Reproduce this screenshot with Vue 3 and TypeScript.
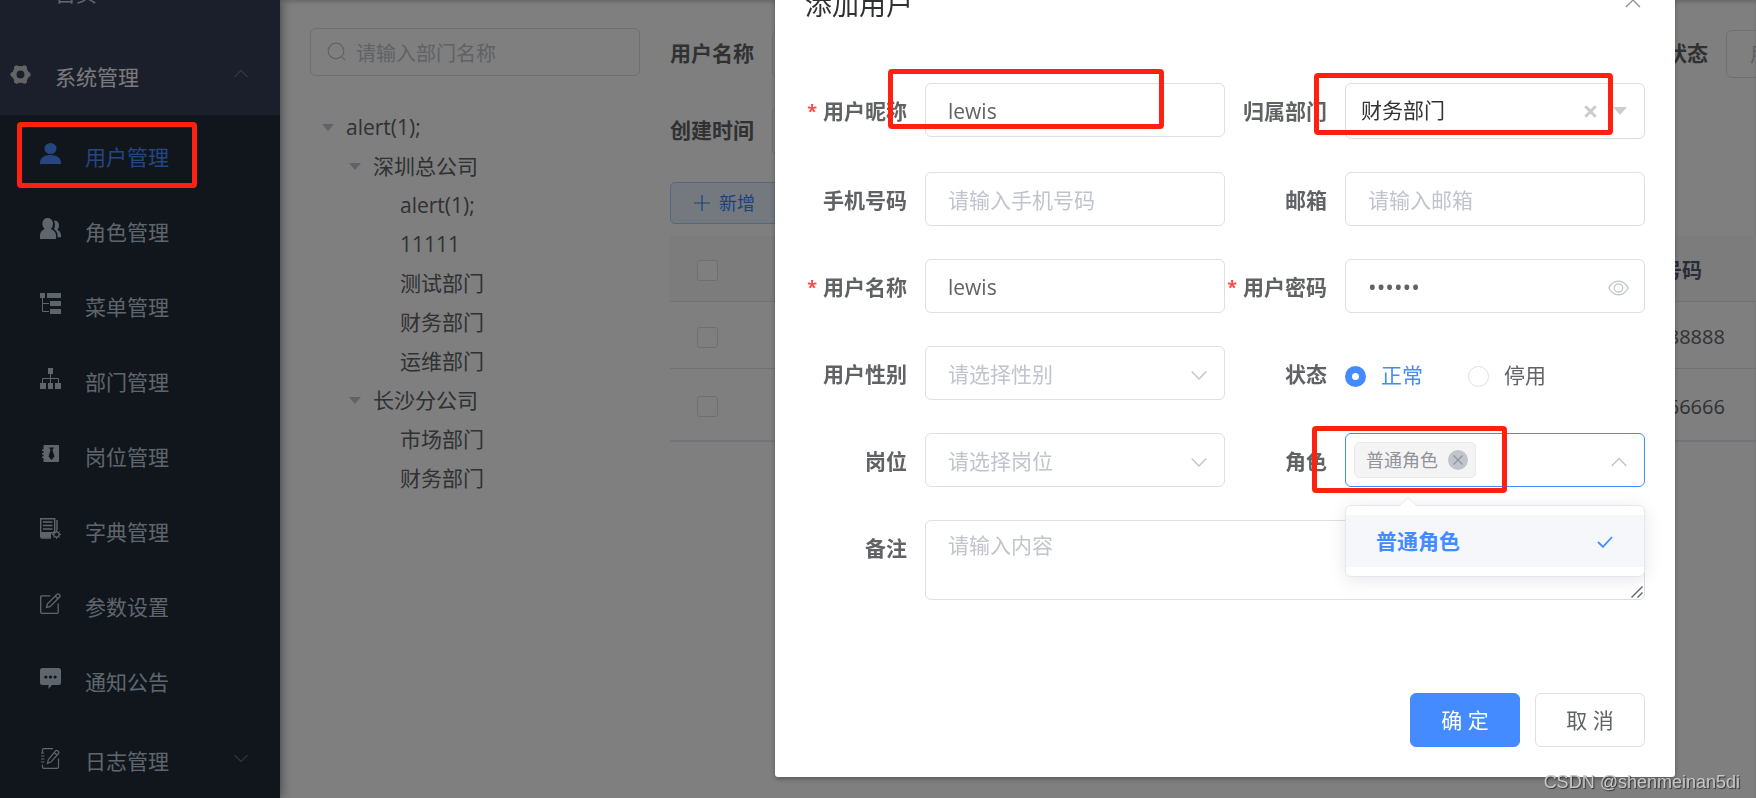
<script setup lang="ts">
import { ref } from 'vue'

interface MenuItem {
  label: string
  icon: string
  active?: boolean
}

interface TreeRow {
  label: string
  level: number
  open?: boolean
}

const menu: MenuItem[] = [
  { label: '用户管理', icon: 'user', active: true },
  { label: '角色管理', icon: 'peoples' },
  { label: '菜单管理', icon: 'tree-table' },
  { label: '部门管理', icon: 'tree' },
  { label: '岗位管理', icon: 'post' },
  { label: '字典管理', icon: 'dict' },
  { label: '参数设置', icon: 'edit' },
  { label: '通知公告', icon: 'message' },
]

const tree: TreeRow[] = [
  { label: 'alert(1);', level: 0, open: true },
  { label: '深圳总公司', level: 1, open: true },
  { label: 'alert(1);', level: 2 },
  { label: '11111', level: 2 },
  { label: '测试部门', level: 2 },
  { label: '财务部门', level: 2 },
  { label: '运维部门', level: 2 },
  { label: '长沙分公司', level: 1, open: true },
  { label: '市场部门', level: 2 },
  { label: '财务部门', level: 2 },
]

const phones: string[] = ['15888888888', '15666666666']

const nickName = ref('lewis')
const userName = ref('lewis')
const password = ref('123456')
const phone = ref('')
const email = ref('')
const sex = ref('')
const post = ref('')
const remark = ref('')
const status = ref('0')
</script>

<template>
  <div class="page">
    <nav class="sidebar">
      <a class="menu-title home" href="#"><span class="menu-text">首页</span></a>
      <a class="menu-title opened" href="#">
        <svg class="icon" viewBox="0 0 21 21">
          <circle cx="10.5" cy="10.5" r="6.2" fill="none" stroke="currentColor" stroke-width="4.4" />
          <path
            d="M17.3 10.5h.8M3.7 10.5h-.8M13.9 16.4l.5.8M7.1 16.4l-.5.8M13.9 4.6l.5-.8M7.1 4.6l-.5-.8"
            fill="none" stroke="currentColor" stroke-width="5" stroke-linecap="round"
          />
        </svg>
        <span class="menu-text">系统管理</span>
        <svg class="arrow" viewBox="0 0 14 14"><path d="M.5 10 7 3.500l6.500 6.500" /></svg>
      </a>
      <div class="submenu">
        <a v-for="item in menu" :key="item.label" class="menu-item" :class="{ active: item.active }" href="#">
          <svg class="icon" viewBox="0 0 21 21" fill="currentColor">
            <template v-if="item.icon === 'user'">
              <ellipse cx="10.500" cy="5.500" rx="6" ry="5.500" />
              <path d="M0 21v-2.500C1 14 5.500 12 10.500 12S20 14 21 18.500V21z" />
            </template>
            <template v-else-if="item.icon === 'peoples'">
              <path d="M7.700 0C11 0 13 2.500 13 5.500c0 2.400-.9 4.400-2.300 5.600 3 1 5.300 3.400 5.300 6.400V21H0v-3.500c0-3 2-5.400 4.800-6.400C3.300 9.900 2.400 7.900 2.400 5.500 2.400 2.500 4.400 0 7.700 0z" />
              <path d="M14 2.600c3.200 0 5 2 5 4.600 0 2-.7 3.500-1.800 4.600 2.300 1 3.800 3 3.800 5.700v1.800h-3.500v-2c0-2.800-1.500-4.800-3.500-6.300 1-2 1.500-5 0-8.400z" />
            </template>
            <template v-else-if="item.icon === 'tree-table'">
              <path d="M0 0h5v5H0zM7 0h14v5H7zM10 8h11v5H10zM10 16h11v5H10z" />
              <path d="M2.500 5v13.500H9M2.500 10.500H9" fill="none" stroke="currentColor" />
            </template>
            <template v-else-if="item.icon === 'tree'">
              <path d="M8 0h5v6H8zM0 15h6v6H0zM8 15h5v6H8zM15 15h6v6h-6z" />
              <path d="M10.500 6v9M2.500 15v-4.500h16V15" fill="none" stroke="currentColor" />
            </template>
            <template v-else-if="item.icon === 'post'">
              <path
                fill-rule="evenodd"
                d="M4.500 2H18q1 0 1 1v15q0 1-1 1H4.500q-1 0-1-1v-3H2v-1.500h1.500V11.500H2V10h1.500V8H2V6.500h1.500V3q0-1 1-1zM9 4.500 10.500 7 8.500 13.500 11.500 17l3-3.500L12.500 7 14 4.500z"
              />
            </template>
            <template v-else-if="item.icon === 'dict'">
              <path d="M.7.7h14v14H.7zM17 2v10M.7 14v4.500q0 1.500 1.500 1.500H11" fill="none" stroke="currentColor" stroke-width="1.400" />
              <path d="M3 4h9.500M3 7.500h9.500M3 11h9.500" stroke="currentColor" stroke-width="1.600" />
              <path d="M1 15h10v4.500H1z" />
              <circle cx="16.500" cy="16.500" r="2.700" fill="none" stroke="currentColor" stroke-width="1.200" />
              <path d="M16.500 12v2M16.500 19v2M12 16.500h2M19 16.500h2M13.400 13.400l1.300 1.300M18.300 18.300l1.300 1.300M19.600 13.400l-1.300 1.300M14.700 18.300l-1.300 1.300" stroke="currentColor" />
            </template>
            <template v-else-if="item.icon === 'edit'">
              <path d="M10.500 2.800H2Q.7 2.800.7 4v15.200Q.7 20.300 2 20.300h15q1.200 0 1.200-1.200V10.500" fill="none" stroke="currentColor" stroke-width="1.300" />
              <path d="M6.500 14.500 7.300 11 17 1.300q.9-.9 1.900 0l.8.800q.9.900 0 1.900L10 13.700zM15.200 3l2.800 2.800" fill="none" stroke="currentColor" stroke-width="1.300" />
            </template>
            <template v-else>
              <path
                fill-rule="evenodd"
                d="M2.500 0h16Q21 0 21 2.500v12q0 2.500-2.500 2.500H12l-3.500 4v-4h-6Q0 17 0 14.500v-12Q0 0 2.500 0zM4.300 9a1.600 1.600 0 1 0 3.200 0 1.600 1.600 0 1 0-3.200 0zm4.600 0a1.600 1.600 0 1 0 3.200 0 1.600 1.600 0 1 0-3.200 0zm4.600 0a1.600 1.600 0 1 0 3.200 0 1.600 1.600 0 1 0-3.200 0z"
              />
            </template>
          </svg>
          <span class="menu-text">{{ item.label }}</span>
        </a>
        <a class="menu-title sub" href="#">
          <svg class="icon" viewBox="0 0 21 21" fill="none" stroke="currentColor" stroke-width="1.200">
            <path d="M2.500 5V2q0-1.400 1.400-1.400H13M2.500 16.500V19q0 1.400 1.400 1.400h13.200q1.400 0 1.400-1.400v-8.500M1 8h3.500M1 11h3.500M1 14h3.500M1 5h3" />
            <path d="M7.500 15.500l.8-3.800L15.500 3q1-1.200 2.200-.2l.5.500q1.200 1 .2 2.200l-7.200 8.300zM14.200 4.600l2.700 2.500" />
          </svg>
          <span class="menu-text">日志管理</span>
          <svg class="arrow" viewBox="0 0 14 14"><path d="M.5 4 7 10.500 13.500 4" /></svg>
        </a>
      </div>
    </nav>

    <main class="main">
      <aside class="dept">
        <label class="dept-search">
          <svg viewBox="0 0 20 20" fill="none" stroke="currentColor" stroke-width="1.200">
            <circle cx="9" cy="9" r="7.800" /><path d="M14.800 14.800 18 18" />
          </svg>
          <input type="text" placeholder="请输入部门名称" aria-label="部门名称" />
        </label>
        <ul class="tree">
          <li v-for="(row, i) in tree" :key="i" :class="'level-' + row.level">
            <span class="caret" :class="{ open: row.open }"></span>
            <span>{{ row.label }}</span>
          </li>
        </ul>
      </aside>

      <section class="content">
        <form class="filters">
          <div class="filter">
            <label for="f-name">用户名称</label>
            <input id="f-name" type="text" />
          </div>
          <div class="filter third">
            <label for="f-status">状态</label>
            <input id="f-status" type="text" placeholder="用户状态" />
          </div>
          <div class="filter">
            <label for="f-date">创建时间</label>
            <input id="f-date" type="text" />
          </div>
        </form>
        <button class="add" type="button">
          <svg viewBox="0 0 16 16"><path d="M8 0v16M0 8h16" stroke="currentColor" stroke-width="1.200" /></svg>
          <span>新增</span>
        </button>
        <table>
          <colgroup><col class="c-check" /><col /><col class="c-phone" /><col class="c-end" /></colgroup>
          <thead>
            <tr>
              <th><input type="checkbox" aria-label="全选" /></th>
              <th></th>
              <th>手机号码</th>
              <th></th>
            </tr>
          </thead>
          <tbody>
            <tr v-for="p in phones" :key="p">
              <td><input type="checkbox" :aria-label="p" /></td>
              <td></td>
              <td>{{ p }}</td>
              <td></td>
            </tr>
          </tbody>
        </table>
      </section>
    </main>

    <div class="mask">
      <div class="dialog" role="dialog" aria-labelledby="dialog-title">
        <header class="dialog-head">
          <h2 id="dialog-title">添加用户</h2>
          <button class="close" type="button" aria-label="关闭">
            <svg viewBox="0 0 16 16"><path d="M1 1l14 14M15 1 1 15" stroke="currentColor" stroke-width="1.400" /></svg>
          </button>
        </header>
        <form class="form">
          <div class="field">
            <label class="required" for="nick">用户昵称</label>
            <input id="nick" v-model="nickName" class="box" type="text" />
          </div>
          <div class="field">
            <label for="dept">归属部门</label>
            <button id="dept" class="box treeselect" type="button">
              <span>财务部门</span>
              <svg class="clear" viewBox="0 0 12 12"><path d="M1.200 1.200l9.600 9.600M10.800 1.200l-9.600 9.600" stroke="currentColor" stroke-width="2.800" /></svg>
              <svg class="down" viewBox="0 0 14 8"><path d="M0 0h14L7 8z" fill="currentColor" /></svg>
            </button>
          </div>
          <div class="field">
            <label for="phone">手机号码</label>
            <input id="phone" v-model="phone" class="box" type="text" placeholder="请输入手机号码" />
          </div>
          <div class="field">
            <label for="email">邮箱</label>
            <input id="email" v-model="email" class="box" type="text" placeholder="请输入邮箱" />
          </div>
          <div class="field">
            <label class="required" for="uname">用户名称</label>
            <input id="uname" v-model="userName" class="box" type="text" />
          </div>
          <div class="field">
            <label class="required" for="pwd">用户密码</label>
            <div class="control">
              <input id="pwd" v-model="password" class="box" type="password" />
              <svg class="suffix eye" viewBox="0 0 21 16" fill="none" stroke="currentColor" stroke-width="1.300">
                <path d="M.8 8Q4.500 1.200 10.500 1.200T20.200 8Q16.500 14.800 10.500 14.800T.8 8z" /><circle cx="10.500" cy="8" r="4.200" />
              </svg>
            </div>
          </div>
          <div class="field">
            <label for="sex">用户性别</label>
            <div class="control">
              <select id="sex" v-model="sex" class="box"><option value="">请选择性别</option></select>
              <svg class="suffix" viewBox="0 0 16 16"><path class="chev" d="M.7 4.500 8 12l7.300-7.500" /></svg>
            </div>
          </div>
          <div class="field">
            <span class="label">状态</span>
            <div class="radios">
              <label><input v-model="status" type="radio" name="status" value="0" /><span>正常</span></label>
              <label><input v-model="status" type="radio" name="status" value="1" /><span>停用</span></label>
            </div>
          </div>
          <div class="field">
            <label for="post">岗位</label>
            <div class="control">
              <select id="post" v-model="post" class="box"><option value="">请选择岗位</option></select>
              <svg class="suffix" viewBox="0 0 16 16"><path class="chev" d="M.7 4.500 8 12l7.300-7.500" /></svg>
            </div>
          </div>
          <div class="field">
            <span class="label">角色</span>
            <div class="control">
              <div class="box roles" role="combobox" aria-label="角色" aria-expanded="true">
                <span class="tag">
                  普通角色
                  <button type="button" aria-label="移除">
                    <svg viewBox="0 0 20 20"><path d="M5.500 5.500l9 9M14.500 5.500l-9 9" stroke="currentColor" stroke-width="1.200" /></svg>
                  </button>
                </span>
              </div>
              <svg class="suffix" viewBox="0 0 16 16"><path class="chev" d="M.7 12 8 4.500l7.300 7.500" /></svg>
              <div class="dropdown" role="listbox">
                <svg class="tip" viewBox="0 0 18 9"><path d="M0 9 9 .7 18 9" /></svg>
                <div class="option" role="option" aria-selected="true">
                  <span>普通角色</span>
                  <svg viewBox="0 0 16 12"><path d="M1 6l5 4.800L15 1" fill="none" stroke="currentColor" stroke-width="1.800" /></svg>
                </div>
              </div>
            </div>
          </div>
          <div class="field wide">
            <label for="remark">备注</label>
            <div class="control">
              <textarea id="remark" v-model="remark" class="box" placeholder="请输入内容"></textarea>
              <svg class="grip" viewBox="0 0 12 12"><path d="M.5 11.500 11.500.5M6.500 11.500l5-5" stroke="currentColor" stroke-width="1.400" /></svg>
            </div>
          </div>
        </form>
        <footer class="dialog-foot">
          <button class="btn primary" type="button">确 定</button>
          <button class="btn" type="button">取 消</button>
        </footer>
      </div>
    </div>

    <div class="mark mark-menu"></div>
    <div class="mark mark-nick"></div>
    <div class="mark mark-dept"></div>
    <div class="mark mark-role"></div>
    <div class="watermark">CSDN @shenmeinan5di</div>
  </div>
</template>

<style>
html,
body,
#app {
  height: 100%;
  overflow: hidden;
}
</style>

<style scoped>
.page,
.page * {
  box-sizing: border-box;
}
.page {
  position: relative;
  display: flex;
  height: 100%;
  overflow: hidden;
  background: #fff;
  color: #606266;
  font: 21px/1.5 'Open Sans', 'Noto Sans CJK SC', sans-serif;
}
input,
select,
textarea,
button {
  font: inherit;
  color: inherit;
  margin: 0;
}
button {
  cursor: pointer;
}
::placeholder {
  color: #c0c4cc;
  opacity: 1;
}

/* sidebar */
.sidebar {
  position: relative;
  z-index: 1;
  flex: none;
  display: flex;
  flex-direction: column;
  width: 280px;
  background: #343f56;
  box-shadow: 3px 0 9px rgba(0, 21, 41, 0.35);
  color: #bfcbd9;
}
.sidebar a {
  display: flex;
  flex: none;
  align-items: center;
  color: inherit;
  text-decoration: none;
}
.menu-title {
  height: 84px;
  padding: 2px 32px 0 10px;
}
.menu-title.home {
  margin-top: -53px;
  padding-left: 55px;
}
.sidebar .opened {
  color: #f4f4f5;
}
.opened .icon {
  color: #c8c8c8;
}
.submenu {
  flex: none;
  background: #202c38;
}
.menu-item,
.menu-title.sub {
  padding-left: 40px;
}
.menu-item {
  height: 75px;
  padding-top: 2px;
}
.sidebar .active {
  color: #4a8cff;
}
.icon {
  flex: none;
  width: 21px;
  height: 21px;
  margin-right: 24px;
}
.menu-text {
  padding-top: 8px;
}
.arrow {
  width: 14px;
  height: 14px;
  margin-left: auto;
  fill: none;
  stroke: #909399;
}

/* page behind the dialog */
.main {
  flex: 1;
  display: flex;
  gap: 30px;
  min-width: 0;
  padding-left: 30px;
  box-shadow: inset 0 3px 4px -1px rgba(0, 0, 0, 0.2);
}
.dept {
  flex: none;
  width: 330px;
  padding-top: 28px;
}
.dept-search {
  display: flex;
  align-items: center;
  height: 48px;
  padding: 0 16px;
  gap: 9px;
  border: 1px solid #dcdfe6;
  border-radius: 6px;
  color: #c0c4cc;
  font-size: 20px;
}
.dept-search svg {
  flex: none;
  width: 20px;
  height: 20px;
}
.dept-search input {
  flex: 1;
  min-width: 0;
  padding: 3px 0 0;
  border: 0;
  background: none;
}
.tree {
  margin: 32px 0 0;
  padding: 0;
  list-style: none;
}
.tree li {
  display: flex;
  align-items: center;
  height: 39px;
  padding-left: 12px;
}
.tree .level-1 {
  padding-left: 39px;
}
.tree .level-2 {
  padding-left: 66px;
}
.caret {
  width: 12px;
  margin-right: 12px;
}
.caret.open {
  border: 6px solid transparent;
  border-top: 7px solid #c0c4cc;
  border-bottom: 0;
}
.content {
  flex: 1;
  min-width: 0;
  overflow: hidden;
  padding-top: 30px;
}
.filters {
  display: grid;
  grid-template-columns: repeat(3, 462px);
  column-gap: 15px;
  row-gap: 29px;
}
.filter {
  display: flex;
  align-items: center;
}
.filter.third {
  grid-column: 3;
}
.filter label {
  flex: none;
  width: 102px;
  padding-right: 18px;
  text-align: right;
  font-weight: 700;
}
.filter input {
  flex: 1;
  min-width: 0;
  height: 48px;
  padding: 0 23px;
  border: 1px solid #dcdfe6;
  border-radius: 6px;
  background: none;
  font-size: 20px;
}
.add {
  display: flex;
  align-items: center;
  gap: 9px;
  height: 42px;
  margin: 27px 0 12px;
  padding: 0 23px;
  border: 1px solid #a3d0ff;
  border-radius: 5px;
  background: #e8f2ff;
  color: #3c82f6;
  font-size: 18px;
}
.add svg {
  width: 16px;
  height: 16px;
}
table {
  width: 100%;
  table-layout: fixed;
  border-collapse: separate;
  border-spacing: 0;
  border-bottom: 2px solid #e6e6f2;
  font-size: 20px;
}
.c-check {
  width: 75px;
}
.c-phone {
  width: 180px;
}
.c-end {
  width: 4px;
}
th,
td {
  height: 67px;
  padding: 4px 0 0;
  border-bottom: 1px solid #dfe3ec;
  text-align: center;
  vertical-align: middle;
}
th {
  height: 66px;
  background: #f8f8f9;
  color: #515a6e;
}
tbody tr:last-child td {
  height: 71px;
  border-bottom: 0;
}
table input {
  display: block;
  appearance: none;
  width: 21px;
  height: 21px;
  margin: 0 auto;
  border: 1px solid #dcdfe6;
  border-radius: 3px;
  background: #fff;
}

/* dialog */
.mask {
  position: fixed;
  inset: 0;
  z-index: 2;
  display: flex;
  justify-content: flex-end;
  align-items: flex-start;
  padding-right: 81px;
  overflow: hidden;
  background: rgba(0, 0, 0, 0.5);
}
.dialog {
  flex: 0 1 900px;
  margin-top: -43px;
  border-radius: 3px;
  background: #fff;
  box-shadow: 0 2px 5px rgba(0, 0, 0, 0.3);
}
.dialog-head {
  display: flex;
  align-items: center;
  justify-content: space-between;
  padding: 30px 34px 15px 30px;
}
.dialog-head h2 {
  margin: 0;
  color: #303133;
  font-size: 27px;
  font-weight: 400;
  line-height: 36px;
}
.close {
  display: flex;
  padding: 0;
  margin-bottom: 10px;
  border: 0;
  background: none;
  color: #909399;
}
.close svg {
  width: 16px;
  height: 16px;
}
.form {
  display: grid;
  grid-template-columns: 1fr 1fr;
  row-gap: 33px;
  padding: 45px 30px 78px;
}
.field {
  display: flex;
  min-width: 0;
}
.wide {
  grid-column: 1 / -1;
}
.field > label,
.field > .label {
  flex: none;
  width: 120px;
  height: 54px;
  padding: 1px 18px 0 0;
  text-align: right;
  font-weight: 700;
  line-height: 54px;
  white-space: nowrap;
}
.required {
  display: flex;
  justify-content: flex-end;
}
.required::before {
  content: '*';
  margin-right: 6px;
  color: #ff4949;
  font-size: 18px;
}
.control {
  position: relative;
  flex: 1;
  min-width: 0;
}
.box {
  flex: 1;
  display: block;
  width: 100%;
  min-width: 0;
  height: 54px;
  padding: 2px 22px 0;
  border: 1px solid #dcdfe6;
  border-radius: 6px;
  outline: 0;
  background: #fff;
}
select.box {
  appearance: none;
  padding-top: 3px;
  color: #c0c4cc;
}
input[type='password'] {
  font-size: 23px;
}
.treeselect {
  display: flex;
  align-items: center;
  height: 56px;
  padding: 0 17px 0 15px;
  border-color: #ddd;
  color: #333;
}
.treeselect svg {
  color: #ccc;
}
.clear {
  width: 13px;
  height: 13px;
  margin: 0 16px 0 auto;
}
.down {
  width: 14px;
  height: 8px;
}
.suffix {
  position: absolute;
  top: 21px;
  right: 18px;
  width: 16px;
  height: 16px;
  color: #c0c4cc;
}
.eye {
  right: 16px;
  width: 21px;
}
.chev {
  fill: none;
  stroke: currentColor;
  stroke-width: 1.4;
}
.radios {
  display: flex;
  align-items: center;
  gap: 45px;
  padding-top: 6px;
}
.radios label {
  display: flex;
  align-items: center;
  gap: 15px;
}
.radios input {
  appearance: none;
  width: 21px;
  height: 21px;
  border: 1px solid #dcdfe6;
  border-radius: 50%;
  background: #fff;
}
.radios input:checked {
  border: 7px solid #438bff;
}
.radios input:checked + span {
  color: #438bff;
}
.roles {
  display: flex;
  align-items: center;
  padding: 0 8px;
  border-color: #438bff;
}
.tag {
  display: flex;
  align-items: center;
  gap: 10px;
  height: 36px;
  padding: 0 7px 0 11px;
  border: 1px solid #e9e9eb;
  border-radius: 5px;
  background: #f4f4f5;
  color: #909399;
  font-size: 18px;
}
.tag button {
  display: flex;
  padding: 0;
  border: 0;
  border-radius: 50%;
  background: #c0c4cc;
}
.tag svg {
  width: 20px;
  height: 20px;
}
.dropdown {
  position: absolute;
  top: 72px;
  left: 0;
  right: 0;
  z-index: 1;
  padding: 9px 0;
  border: 1px solid #e4e7ed;
  border-radius: 6px;
  background: #fff;
  box-shadow: 0 3px 18px rgba(0, 0, 0, 0.1);
}
.tip {
  position: absolute;
  top: -9px;
  left: 53px;
  width: 18px;
  height: 9px;
  fill: #fff;
  stroke: #e4e7ed;
}
.option {
  display: flex;
  align-items: center;
  justify-content: space-between;
  height: 52px;
  padding: 2px 31px 0 30px;
  background: #f5f7fa;
  color: #438bff;
  font-weight: 700;
}
.option svg {
  width: 16px;
  height: 12px;
}
textarea.box {
  height: 80px;
  padding: 9px 22px;
  resize: none;
}
.grip {
  position: absolute;
  right: 2px;
  bottom: 2px;
  width: 12px;
  height: 12px;
}
.dialog-foot {
  display: flex;
  justify-content: flex-end;
  gap: 15px;
  padding: 15px 30px 30px;
}
.btn {
  width: 110px;
  height: 54px;
  padding: 2px 0 0;
  border: 1px solid #dcdfe6;
  border-radius: 6px;
  background: #fff;
}
.btn.primary {
  border-color: #438bff;
  background: #438bff;
  color: #fff;
}

/* annotations laid over the page */
.mark {
  position: absolute;
  z-index: 3;
  border: 5px solid #ff2012;
  border-radius: 4px;
  pointer-events: none;
}
.mark-menu {
  left: 17px;
  top: 122px;
  width: 180px;
  height: 66px;
}
.mark-nick {
  right: 592px;
  top: 69px;
  width: 276px;
  height: 60px;
}
.mark-dept {
  right: 143px;
  top: 73px;
  width: 299px;
  height: 62px;
}
.mark-role {
  right: 249px;
  top: 426px;
  width: 195px;
  height: 67px;
}
.watermark {
  position: absolute;
  right: 16px;
  bottom: 4px;
  z-index: 3;
  color: #c8c8c8;
  font: 18px/24px 'Liberation Sans', sans-serif;
  text-shadow: 1px 1px 1px #333;
}
</style>
